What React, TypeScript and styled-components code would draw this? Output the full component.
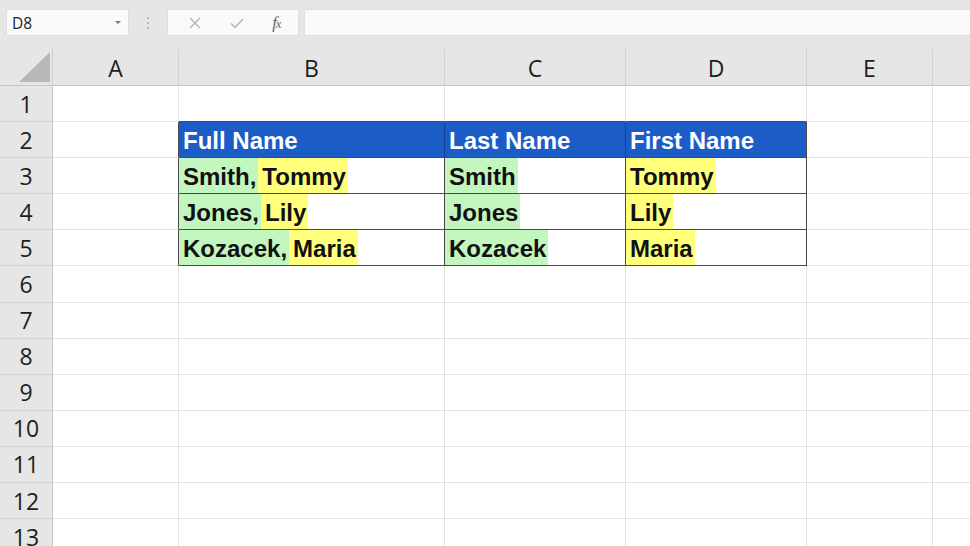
import React from 'react';
import styled, { createGlobalStyle, css } from 'styled-components';

const GRID_LINE = '#e2e2e2';
const TABLE_LINE = '#4a4a4a';
const HEADER_BG = '#e6e6e6';
const BLUE = '#1b5cc7';
const GREEN = '#c3f5bf';
const YELLOW = '#ffff7c';

const COLS = [126, 266, 181, 181, 126, 126];
const LETTERS = ['A', 'B', 'C', 'D', 'E', ''];
const ROWS = 13;

const GlobalStyle = createGlobalStyle`
    html, body {
        margin: 0;
        padding: 0;
        background: #ffffff;
        overflow: hidden;
    }
    body {
        font-family: 'Open Sans', 'Liberation Sans', sans-serif;
    }
`;

const Page = styled.div`
    width: 970px;
    height: 546px;
    overflow: hidden;
    background: #ffffff;
`;

/* ---------- formula bar ---------- */

const TopBar = styled.div`
    height: 49px;
    background: ${HEADER_BG};
    display: flex;
    align-items: center;
    padding: 0 0 4px 6px;
    box-sizing: border-box;
`;

const Box = styled.div`
    height: 27px;
    background: #fafafa;
    border: 1px solid #dedede;
    box-sizing: border-box;
    display: flex;
    align-items: center;
`;

const NameBox = styled(Box)`
    width: 123px;
    padding: 0 6px 0 5px;
    justify-content: space-between;
    font-size: 15.5px;
    color: #222;
`;

const Caret = styled.span`
    width: 0;
    height: 0;
    border-left: 3px solid transparent;
    border-right: 3px solid transparent;
    border-top: 3px solid #777;
    margin-right: 1px;
`;

const Grip = styled.div`
    width: 38px;
    display: flex;
    flex-direction: column;
    align-items: center;
    gap: 3px;

    span {
        width: 2px;
        height: 2px;
        background: #aaa;
        border-radius: 50%;
    }
`;

const FxBox = styled(Box)`
    width: 132px;
    justify-content: space-around;
    padding: 0 4px 0 6px;
`;

const FxLabel = styled.span`
    font-family: 'Liberation Serif', serif;
    font-style: italic;
    font-size: 17px;
    color: #666;
    letter-spacing: -1px;

    sub {
        font-size: 12px;
        vertical-align: baseline;
    }
`;

const FormulaInput = styled(Box)`
    flex: 1;
    margin-left: 5px;
    border-right: none;
`;

/* ---------- sheet ---------- */

const Sheet = styled.div`
    display: grid;
    grid-template-columns: 53px ${COLS.map(c => `${c}px`).join(' ')};
    grid-template-rows: 37px;
    grid-auto-rows: 36.1px;
`;

const Corner = styled.div`
    background: ${HEADER_BG};
    border-right: 1px solid #cfcfcf;
    border-bottom: 1px solid #c6c6c6;
    box-sizing: border-box;
    overflow: hidden;
`;

const ColHead = styled.div`
    background: ${HEADER_BG};
    border-right: 1px solid #d2d2d2;
    border-bottom: 1px solid #c6c6c6;
    box-sizing: border-box;
    display: flex;
    align-items: center;
    justify-content: center;
    font-size: 23px;
    color: #1e1e1e;
    padding-top: 1px;
`;

const RowHead = styled.div`
    background: ${HEADER_BG};
    border-right: 1px solid #c6c6c6;
    border-bottom: 1px solid #d4d4d4;
    box-sizing: border-box;
    display: flex;
    align-items: center;
    justify-content: center;
    font-size: 23px;
    color: #1e1e1e;
`;

type Edge = 'grid' | 'table' | 'blue';

const edgeColour = (e: Edge) => (e === 'table' ? TABLE_LINE : e === 'blue' ? '#18408a' : GRID_LINE);

const Cell = styled.div<{ $right: Edge; $bottom: Edge; $blue?: boolean }>`
    box-sizing: border-box;
    border-right: 1px solid ${p => edgeColour(p.$right)};
    border-bottom: 1px solid ${p => edgeColour(p.$bottom)};
    display: flex;
    align-items: stretch;
    overflow: hidden;
    white-space: pre;
    font-family: 'Liberation Sans', Arial, sans-serif;
    font-weight: 700;
    font-size: 24px;
    color: #111;

    ${p =>
        p.$blue &&
        css`
            background: ${BLUE};
            color: #ffffff;
            align-items: center;
            padding: 2px 0 0 4px;
        `}
`;

const Mark = styled.span<{ $tone: 'green' | 'yellow'; $lead?: boolean }>`
    display: flex;
    align-items: center;
    padding-top: 2px;
    background: ${p => (p.$tone === 'green' ? GREEN : YELLOW)};
    padding-left: ${p => (p.$lead ? 4 : 4)}px;
    padding-right: 2px;
`;

type Piece = { text: string; tone: 'green' | 'yellow' };

const data: Record<string, Piece[]> = {
    '3-1': [
        { text: 'Smith,', tone: 'green' },
        { text: 'Tommy', tone: 'yellow' },
    ],
    '4-1': [
        { text: 'Jones,', tone: 'green' },
        { text: 'Lily', tone: 'yellow' },
    ],
    '5-1': [
        { text: 'Kozacek,', tone: 'green' },
        { text: 'Maria', tone: 'yellow' },
    ],
    '3-2': [{ text: 'Smith', tone: 'green' }],
    '4-2': [{ text: 'Jones', tone: 'green' }],
    '5-2': [{ text: 'Kozacek', tone: 'green' }],
    '3-3': [{ text: 'Tommy', tone: 'yellow' }],
    '4-3': [{ text: 'Lily', tone: 'yellow' }],
    '5-3': [{ text: 'Maria', tone: 'yellow' }],
};

const headers: Record<number, string> = { 1: 'Full Name', 2: 'Last Name', 3: 'First Name' };

const inTable = (r: number, c: number) => r >= 2 && r <= 5 && c >= 1 && c <= 3;

const renderCell = (r: number, c: number) => {
    const table = inTable(r, c);
    const rightEdge: Edge = table || (c === 0 && r >= 2 && r <= 5) ? 'table' : 'grid';
    const bottomEdge: Edge = table || (r === 1 && c >= 1 && c <= 3) ? 'table' : 'grid';

    if (r === 2 && table) {
        return (
            <Cell key={c} $right={c === 3 ? 'table' : 'blue'} $bottom="table" $blue>
                {headers[c]}
            </Cell>
        );
    }

    const pieces = data[`${r}-${c}`];
    return (
        <Cell key={c} $right={rightEdge} $bottom={bottomEdge}>
            {pieces &&
                pieces.map((p, i) => (
                    <Mark key={i} $tone={p.tone} $lead={i === 0}>
                        {p.text}
                    </Mark>
                ))}
        </Cell>
    );
};

const App = () => (
    <Page>
        <GlobalStyle />
        <TopBar>
            <NameBox>
                D8
                <Caret />
            </NameBox>
            <Grip>
                <span />
                <span />
                <span />
            </Grip>
            <FxBox>
                <svg width="14" height="14" viewBox="0 0 14 14">
                    <path d="M2 2 L12 12 M12 2 L2 12" stroke="#b4b4b4" strokeWidth="1.3" fill="none" />
                </svg>
                <svg width="16" height="14" viewBox="0 0 16 14">
                    <path d="M2 7.5 L6 11.5 L14 3" stroke="#b4b4b4" strokeWidth="1.5" fill="none" />
                </svg>
                <FxLabel>
                    f<sub>x</sub>
                </FxLabel>
            </FxBox>
            <FormulaInput />
        </TopBar>
        <Sheet>
            <Corner>
                <svg width="53" height="37" viewBox="0 0 53 37" style={{ display: 'block' }}>
                    <polygon points="50,3 50,33 19,33" fill="#b8b8b8" />
                </svg>
            </Corner>
            {LETTERS.map((l, i) => (
                <ColHead key={i}>{l}</ColHead>
            ))}
            {[...Array(ROWS)].map((_x, ri) => {
                const r = ri + 1;
                return (
                    <React.Fragment key={r}>
                        <RowHead>{r}</RowHead>
                        {COLS.map((_w, ci) => renderCell(r, ci))}
                    </React.Fragment>
                );
            })}
        </Sheet>
    </Page>
);

export default App;
